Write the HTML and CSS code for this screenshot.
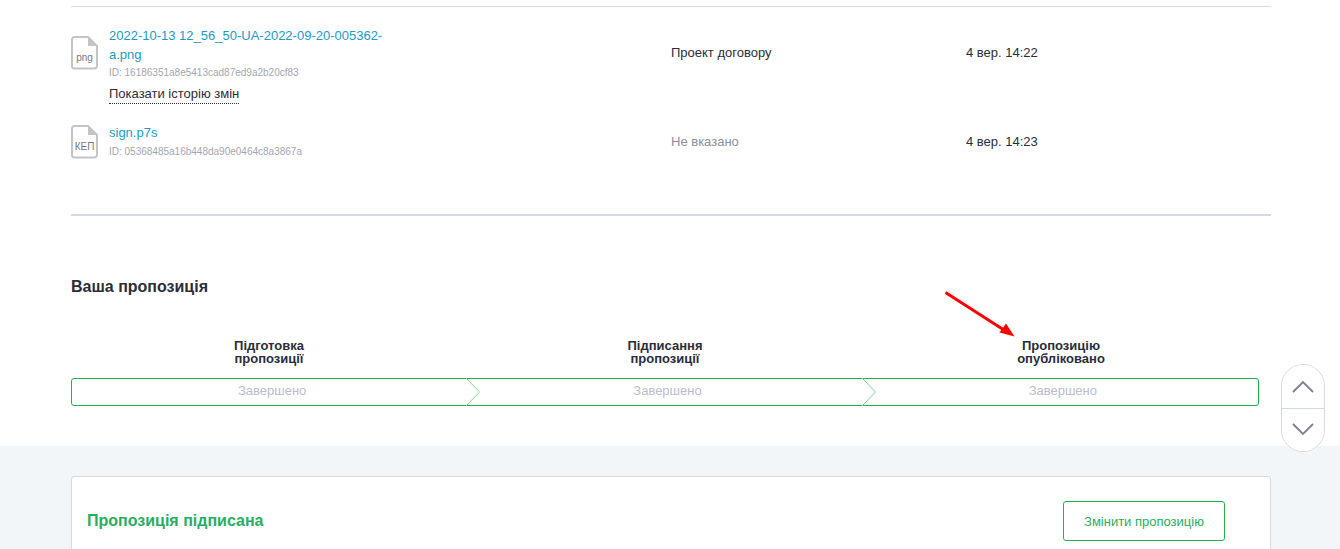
FILE: index.html
```html
<!DOCTYPE html>
<html lang="uk">
<head>
<meta charset="utf-8">
<title>Пропозиція</title>
<link rel="stylesheet" href="styles.css">
</head>
<body>
<main class="top">
  <section class="files">
    <div class="file-row">
      <div class="file-main">
        <svg class="file-icon" width="28" height="36" viewBox="0 0 28 36">
          <path class="file-shape" d="M3.500 1H17l9 9v20a2.500 2.500 0 0 1-2.500 2.500h-20A2.500 2.500 0 0 1 1 30V3.500A2.500 2.500 0 0 1 3.500 1z"/>
          <path class="file-fold" d="M17 1v9h9z"/>
          <text x="13.500" y="24.500" class="file-ext">png</text>
        </svg>
        <div class="file-info">
          <a class="file-name">2022-10-13 12_56_50-UA-2022-09-20-005362-a.png</a>
          <div class="file-id">ID: 16186351a8e5413cad87ed9a2b20cf83</div>
          <span class="history">Показати історію змін</span>
        </div>
      </div>
      <div class="file-type">Проект договору</div>
      <div class="file-date">4 вер. 14:22</div>
    </div>
    <div class="file-row second">
      <div class="file-main">
        <svg class="file-icon" width="28" height="36" viewBox="0 0 28 36">
          <path class="file-shape" d="M3.500 1H17l9 9v20a2.500 2.500 0 0 1-2.500 2.500h-20A2.500 2.500 0 0 1 1 30V3.500A2.500 2.500 0 0 1 3.500 1z"/>
          <path class="file-fold" d="M17 1v9h9z"/>
          <text x="13.500" y="24.500" class="file-ext">КЕП</text>
        </svg>
        <div class="file-info">
          <a class="file-name">sign.p7s</a>
          <div class="file-id">ID: 05368485a16b448da90e0464c8a3867a</div>
        </div>
      </div>
      <div class="file-type muted">Не вказано</div>
      <div class="file-date">4 вер. 14:23</div>
    </div>
  </section>

  <h2 class="proposal-title">Ваша пропозиція</h2>

  <section class="steps">
    <div class="step-titles">
      <div>Підготовка<br>пропозиції</div>
      <div>Підписання<br>пропозиції</div>
      <div>Пропозицію<br>опубліковано</div>
    </div>
    <div class="step-bar">
      <div class="step">Завершено
        <svg class="chevron" width="16" height="28" viewBox="0 0 16 28"><path d="M1 0l13.500 14L1 28"/></svg>
      </div>
      <div class="step">Завершено
        <svg class="chevron" width="16" height="28" viewBox="0 0 16 28"><path d="M1 0l13.500 14L1 28"/></svg>
      </div>
      <div class="step">Завершено</div>
    </div>
  </section>
</main>

<section class="lower">
  <div class="card">
    <div class="card-title">Пропозиція підписана</div>
    <button class="change-btn">Змінити пропозицію</button>
  </div>
</section>

<svg class="red-arrow" width="76" height="50" viewBox="0 0 76 50">
  <path class="red-line" d="M1.500 1.500L60 39"/>
  <path class="red-head" d="M70.500 45.500L55.500 41.500L62 32.500z"/>
</svg>

<div class="scroller">
  <button class="scroll-btn">
    <svg width="22" height="13" viewBox="0 0 22 13"><path d="M1 12L11 2l10 10"/></svg>
  </button>
  <button class="scroll-btn">
    <svg width="22" height="13" viewBox="0 0 22 13"><path d="M1 1l10 10L21 1"/></svg>
  </button>
</div>
</body>
</html>
```

FILE: styles.css
```css
* { box-sizing: border-box; }

html, body {
  margin: 0;
  height: 549px;
  overflow: hidden;
  background: #fff;
  font-family: "Liberation Sans", Arial, sans-serif;
  color: #2b2d38;
}

.top {
  height: 446px;
  padding: 6px 69px 0 71px;
  background: #fff;
}

.files {
  height: 210px;
  border-top: 1px solid #d5d9e3;
  border-bottom: 2px solid #d5d9e3;
  padding-top: 19px;
}

.file-row {
  display: grid;
  grid-template-columns: 600px 295px 1fr;
  height: 89px;
}

.file-main { display: flex; align-items: flex-start; }

.file-icon { flex: none; margin: 10px 10px 0 0; }

.file-shape { fill: #fff; stroke: #c4c4c4; stroke-width: 2; }
.file-fold { fill: #c4c4c4; }
.file-ext { font-size: 10px; fill: #77777f; text-anchor: middle; font-family: "Liberation Sans", sans-serif; }

.file-info { width: 282px; }

.second .file-info { padding-top: 8px; }

.file-name {
  display: block;
  font-size: 13px;
  line-height: 19px;
  color: #1a9bc7;
}

.second .file-id { margin-top: 1px; }

.file-id {
  font-size: 10px;
  line-height: 18px;
  color: #a3a6b1;
}

.history {
  display: inline-block;
  margin-top: 2px;
  font-size: 13px;
  line-height: 19px;
  border-bottom: 1px dotted #2b2d38;
}

.file-type, .file-date {
  font-size: 13px;
  padding-top: 18px;
  line-height: 17px;
}

.muted { color: #8b8f9c; }

.proposal-title {
  margin: 61px 0 0;
  font-size: 16px;
  line-height: 20px;
  font-weight: bold;
}

.steps { width: 1188px; margin-top: 42px; }

.step-titles {
  display: grid;
  grid-template-columns: repeat(3, 1fr);
  font-size: 13px;
  font-weight: bold;
  line-height: 13px;
  text-align: center;
}

.step-bar {
  display: grid;
  grid-template-columns: repeat(3, 1fr);
  height: 28px;
  margin-top: 13px;
  border: 1px solid #22b14c;
  border-radius: 3px;
}

.step {
  position: relative;
  padding-left: 5px;
  font-size: 13px;
  line-height: 24px;
  text-align: center;
  color: #b9bdc9;
}

.chevron {
  position: absolute;
  right: -14px;
  top: -1px;
}

.chevron path { fill: #fff; stroke: #7fd39a; stroke-width: 1; }

.lower {
  height: 103px;
  padding: 30px 69px 0 71px;
  background: #f3f6f9;
}

.card {
  display: flex;
  justify-content: space-between;
  height: 120px;
  padding: 24px 45px 0 15px;
  background: #fff;
  border: 1px solid #d5d9e3;
  border-radius: 3px;
}

.card-title {
  font-size: 16px;
  line-height: 40px;
  font-weight: bold;
  color: #27ae60;
}

.change-btn {
  width: 162px;
  height: 40px;
  background: #fff;
  border: 1px solid #22b14c;
  border-radius: 3px;
  font: 13px "Liberation Sans", Arial, sans-serif;
  color: #27ae60;
}

.red-arrow { position: absolute; left: 944px; top: 291px; }
.red-line { stroke: #f00; stroke-width: 3; fill: none; }
.red-head { fill: #f00; }

.scroller {
  position: fixed;
  left: 1281px;
  top: 364px;
  width: 44px;
  height: 88px;
  display: flex;
  flex-direction: column;
  background: #fff;
  border: 1px solid #d5d9e3;
  border-radius: 22px;
  overflow: hidden;
}

.scroll-btn {
  flex: 1;
  display: flex;
  align-items: center;
  justify-content: center;
  padding: 0;
  border: 0;
  background: #fff;
}

.scroll-btn + .scroll-btn { border-top: 1px solid #d5d9e3; }

.scroll-btn path { fill: none; stroke: #7b828f; stroke-width: 1.800; }
```
